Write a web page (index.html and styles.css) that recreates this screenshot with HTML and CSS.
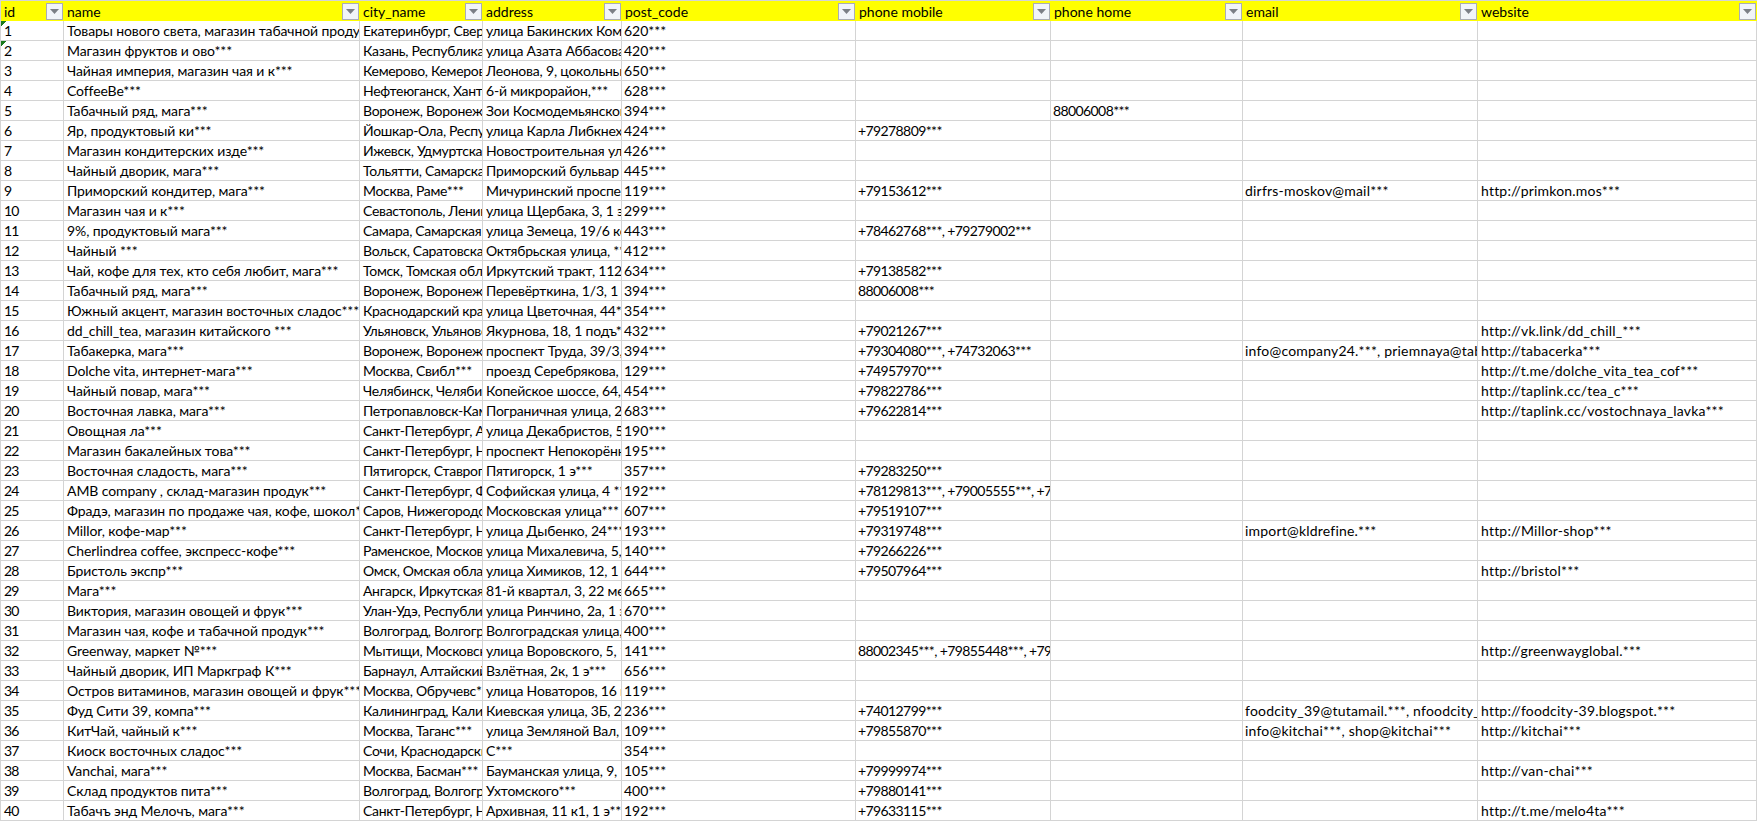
FILE: index.html
```html
<!DOCTYPE html>
<html lang="ru">
<head>
<meta charset="utf-8">
<title>Магазины</title>
<link rel="stylesheet" href="styles.css">
</head>
<body>
<table class="sheet">
<colgroup><col class="c-id"><col class="c-name"><col class="c-city"><col class="c-addr"><col class="c-post"><col class="c-mob"><col class="c-home"><col class="c-mail"><col class="c-web"></colgroup>
<thead><tr>
<th><div class="hd"><span>id</span><span class="filter"><svg viewBox="0 0 9 5" class="tri"><path d="M0 0h9L4.5 5z"/></svg></span></div></th>
<th><div class="hd"><span>name</span><span class="filter"><svg viewBox="0 0 9 5" class="tri"><path d="M0 0h9L4.5 5z"/></svg></span></div></th>
<th><div class="hd"><span>city_name</span><span class="filter"><svg viewBox="0 0 9 5" class="tri"><path d="M0 0h9L4.5 5z"/></svg></span></div></th>
<th><div class="hd"><span>address</span><span class="filter"><svg viewBox="0 0 9 5" class="tri"><path d="M0 0h9L4.5 5z"/></svg></span></div></th>
<th><div class="hd"><span>post_code</span><span class="filter"><svg viewBox="0 0 9 5" class="tri"><path d="M0 0h9L4.5 5z"/></svg></span></div></th>
<th><div class="hd"><span>phone mobile</span><span class="filter"><svg viewBox="0 0 9 5" class="tri"><path d="M0 0h9L4.5 5z"/></svg></span></div></th>
<th><div class="hd"><span>phone home</span><span class="filter"><svg viewBox="0 0 9 5" class="tri"><path d="M0 0h9L4.5 5z"/></svg></span></div></th>
<th><div class="hd"><span>email</span><span class="filter"><svg viewBox="0 0 9 5" class="tri"><path d="M0 0h9L4.5 5z"/></svg></span></div></th>
<th><div class="hd"><span>website</span><span class="filter"><svg viewBox="0 0 9 5" class="tri"><path d="M0 0h9L4.5 5z"/></svg></span></div></th>
</tr></thead>
<tbody>
<tr><td class="flag">1</td><td>Товары нового света, магазин табачной продукции</td><td>Екатеринбург, Свердловская</td><td>улица Бакинских Комиссаров</td><td>620***</td><td></td><td></td><td></td><td></td></tr>
<tr><td class="flag">2</td><td>Магазин фруктов и ово***</td><td>Казань, Республика</td><td>улица Азата Аббасова</td><td>420***</td><td></td><td></td><td></td><td></td></tr>
<tr><td>3</td><td>Чайная империя, магазин чая и к***</td><td>Кемерово, Кемеровская</td><td>Леонова, 9, цокольный</td><td>650***</td><td></td><td></td><td></td><td></td></tr>
<tr><td>4</td><td>CoffeeBe***</td><td>Нефтеюганск, Ханты</td><td>6-й микрорайон,***</td><td>628***</td><td></td><td></td><td></td><td></td></tr>
<tr><td>5</td><td>Табачный ряд, мага***</td><td>Воронеж, Воронежская</td><td>Зои Космодемьянской</td><td>394***</td><td></td><td>88006008***</td><td></td><td></td></tr>
<tr><td>6</td><td>Яр, продуктовый ки***</td><td>Йошкар-Ола, Республика</td><td>улица Карла Либкнехта</td><td>424***</td><td>+79278809***</td><td></td><td></td><td></td></tr>
<tr><td>7</td><td>Магазин кондитерских изде***</td><td>Ижевск, Удмуртская</td><td>Новостроительная улица</td><td>426***</td><td></td><td></td><td></td><td></td></tr>
<tr><td>8</td><td>Чайный дворик, мага***</td><td>Тольятти, Самарская</td><td>Приморский бульвар</td><td>445***</td><td></td><td></td><td></td><td></td></tr>
<tr><td>9</td><td>Приморский кондитер, мага***</td><td>Москва, Раме***</td><td>Мичуринский проспект</td><td>119***</td><td>+79153612***</td><td></td><td>dirfrs-moskov@mail***</td><td>http://primkon.mos***</td></tr>
<tr><td>10</td><td>Магазин чая и к***</td><td>Севастополь, Ленинский</td><td>улица Щербака, 3, 1 этаж</td><td>299***</td><td></td><td></td><td></td><td></td></tr>
<tr><td>11</td><td>9%, продуктовый мага***</td><td>Самара, Самарская</td><td>улица Земеца, 19/6 корпус</td><td>443***</td><td>+78462768***, +79279002***</td><td></td><td></td><td></td></tr>
<tr><td>12</td><td>Чайный ***</td><td>Вольск, Саратовская</td><td>Октябрьская улица, ***</td><td>412***</td><td></td><td></td><td></td><td></td></tr>
<tr><td>13</td><td>Чай, кофе для тех, кто себя любит, мага***</td><td>Томск, Томская область</td><td>Иркутский тракт, 112, 1</td><td>634***</td><td>+79138582***</td><td></td><td></td><td></td></tr>
<tr><td>14</td><td>Табачный ряд, мага***</td><td>Воронеж, Воронежская</td><td>Перевёрткина, 1/3, 1 этаж</td><td>394***</td><td>88006008***</td><td></td><td></td><td></td></tr>
<tr><td>15</td><td>Южный акцент, магазин восточных сладос***</td><td>Краснодарский край</td><td>улица Цветочная, 44***</td><td>354***</td><td></td><td></td><td></td><td></td></tr>
<tr><td>16</td><td>dd_chill_tea, магазин китайского ***</td><td>Ульяновск, Ульяновская</td><td>Якурнова, 18, 1 подъ***</td><td>432***</td><td>+79021267***</td><td></td><td></td><td>http://vk.link/dd_chill_***</td></tr>
<tr><td>17</td><td>Табакерка, мага***</td><td>Воронеж, Воронежская</td><td>проспект Труда, 39/3, 1</td><td>394***</td><td>+79304080***, +74732063***</td><td></td><td>info@company24.***, priemnaya@tabacerka</td><td>http://tabacerka***</td></tr>
<tr><td>18</td><td>Dolche vita, интернет-мага***</td><td>Москва, Свибл***</td><td>проезд Серебрякова, 14</td><td>129***</td><td>+74957970***</td><td></td><td></td><td>http://t.me/dolche_vita_tea_cof***</td></tr>
<tr><td>19</td><td>Чайный повар, мага***</td><td>Челябинск, Челябинская</td><td>Копейское шоссе, 64, 1</td><td>454***</td><td>+79822786***</td><td></td><td></td><td>http://taplink.cc/tea_c***</td></tr>
<tr><td>20</td><td>Восточная лавка, мага***</td><td>Петропавловск-Камчатский</td><td>Пограничная улица, 2</td><td>683***</td><td>+79622814***</td><td></td><td></td><td>http://taplink.cc/vostochnaya_lavka***</td></tr>
<tr><td>21</td><td>Овощная ла***</td><td>Санкт-Петербург, Адмиралтейский</td><td>улица Декабристов, 5</td><td>190***</td><td></td><td></td><td></td><td></td></tr>
<tr><td>22</td><td>Магазин бакалейных това***</td><td>Санкт-Петербург, Невский</td><td>проспект Непокорённых</td><td>195***</td><td></td><td></td><td></td><td></td></tr>
<tr><td>23</td><td>Восточная сладость, мага***</td><td>Пятигорск, Ставропольский</td><td>Пятигорск, 1 э***</td><td>357***</td><td>+79283250***</td><td></td><td></td><td></td></tr>
<tr><td>24</td><td>AMB company , склад-магазин продук***</td><td>Санкт-Петербург, Фрунзенский</td><td>Софийская улица, 4 ***</td><td>192***</td><td>+78129813***, +79005555***, +79</td><td></td><td></td><td></td></tr>
<tr><td>25</td><td>Фрадэ, магазин по продаже чая, кофе, шокол***</td><td>Саров, Нижегородская</td><td>Московская улица***</td><td>607***</td><td>+79519107***</td><td></td><td></td><td></td></tr>
<tr><td>26</td><td>Millor, кофе-мар***</td><td>Санкт-Петербург, Невский</td><td>улица Дыбенко, 24***</td><td>193***</td><td>+79319748***</td><td></td><td>import@kldrefine.***</td><td>http://Millor-shop***</td></tr>
<tr><td>27</td><td>Cherlindrea coffee, экспресс-кофе***</td><td>Раменское, Московская</td><td>улица Михалевича, 5, 1</td><td>140***</td><td>+79266226***</td><td></td><td></td><td></td></tr>
<tr><td>28</td><td>Бристоль экспр***</td><td>Омск, Омская область</td><td>улица Химиков, 12, 1 этаж</td><td>644***</td><td>+79507964***</td><td></td><td></td><td>http://bristol***</td></tr>
<tr><td>29</td><td>Мага***</td><td>Ангарск, Иркутская</td><td>81-й квартал, 3, 22 мест</td><td>665***</td><td></td><td></td><td></td><td></td></tr>
<tr><td>30</td><td>Виктория, магазин овощей и фрук***</td><td>Улан-Удэ, Республика</td><td>улица Ринчино, 2а, 1 этаж</td><td>670***</td><td></td><td></td><td></td><td></td></tr>
<tr><td>31</td><td>Магазин чая, кофе и табачной продук***</td><td>Волгоград, Волгоградская</td><td>Волгоградская улица, 1</td><td>400***</td><td></td><td></td><td></td><td></td></tr>
<tr><td>32</td><td>Greenway, маркет №***</td><td>Мытищи, Московская</td><td>улица Воровского, 5, 1</td><td>141***</td><td>88002345***, +79855448***, +79</td><td></td><td></td><td>http://greenwayglobal.***</td></tr>
<tr><td>33</td><td>Чайный дворик, ИП Маркграф К***</td><td>Барнаул, Алтайский</td><td>Взлётная, 2к, 1 э***</td><td>656***</td><td></td><td></td><td></td><td></td></tr>
<tr><td>34</td><td>Остров витаминов, магазин овощей и фрук***</td><td>Москва, Обручевс***</td><td>улица Новаторов, 16 корпус</td><td>119***</td><td></td><td></td><td></td><td></td></tr>
<tr><td>35</td><td>Фуд Сити 39, компа***</td><td>Калининград, Калининградская</td><td>Киевская улица, 3Б, 2 этаж</td><td>236***</td><td>+74012799***</td><td></td><td>foodcity_39@tutamail.***, nfoodcity_39</td><td>http://foodcity-39.blogspot.***</td></tr>
<tr><td>36</td><td>КитЧай, чайный к***</td><td>Москва, Таганс***</td><td>улица Земляной Вал, 1</td><td>109***</td><td>+79855870***</td><td></td><td>info@kitchai***, shop@kitchai***</td><td>http://kitchai***</td></tr>
<tr><td>37</td><td>Киоск восточных сладос***</td><td>Сочи, Краснодарский</td><td>С***</td><td>354***</td><td></td><td></td><td></td><td></td></tr>
<tr><td>38</td><td>Vanchai, мага***</td><td>Москва, Басман***</td><td>Бауманская улица, 9, 1</td><td>105***</td><td>+79999974***</td><td></td><td></td><td>http://van-chai***</td></tr>
<tr><td>39</td><td>Склад продуктов пита***</td><td>Волгоград, Волгоградская</td><td>Ухтомского***</td><td>400***</td><td>+79880141***</td><td></td><td></td><td></td></tr>
<tr><td>40</td><td>Табачъ энд Мелочъ, мага***</td><td>Санкт-Петербург, Невский</td><td>Архивная, 11 к1, 1 э***</td><td>192***</td><td>+79633115***</td><td></td><td></td><td>http://t.me/melo4ta***</td></tr>
</tbody>
</table>
</body>
</html>
```

FILE: styles.css
```css
html, body {
  margin: 0;
  padding: 0;
  background: #fff;
}
body {
  overflow: hidden;
  font-family: "Lato", "Noto Sans", sans-serif;
  font-size: 14px;
  color: #000;
}
.sheet {
  width: 1757px;
  table-layout: fixed;
  border-collapse: separate;
  border-spacing: 0;
  border-top: 1px solid #d4d4d4;
  border-left: 1px solid #d4d4d4;
}
.c-id { width: 63px; }
.c-name { width: 296px; }
.c-city { width: 123px; }
.c-addr { width: 139px; }
.c-post { width: 234px; }
.c-mob { width: 195px; }
.c-home { width: 192px; }
.c-mail { width: 235px; }
.c-web { width: 279px; }
th {
  height: 20px;
  padding: 0;
  background: #ffff00;
  font-weight: normal;
  text-align: left;
}
.hd {
  display: flex;
  align-items: center;
  justify-content: space-between;
  height: 20px;
  padding-left: 3px;
  padding-right: 1px;
  box-sizing: border-box;
}
.filter {
  display: flex;
  align-items: center;
  justify-content: center;
  width: 17px;
  height: 17px;
  box-sizing: border-box;
  border: 1px solid #a9adb6;
  background: #f1f4f9;
}
.tri {
  width: 9px;
  height: 5px;
  fill: #7b7f86;
}
td {
  height: 20px;
  box-sizing: border-box;
  padding: 1px 0 0 3px;
  border-right: 1px solid #d4d4d4;
  border-bottom: 1px solid #d4d4d4;
  white-space: nowrap;
  overflow: hidden;
  line-height: 18px;
}
td:nth-child(1) { letter-spacing: -0.8px; }
td:nth-child(2) { letter-spacing: -0.1px; }
td:nth-child(3) { letter-spacing: -0.3px; }
td:nth-child(4) { letter-spacing: -0.2px; }
td:nth-child(5) { padding-left: 2px; }
td:nth-child(6),
td:nth-child(7) { padding-left: 2px; letter-spacing: -0.6px; }
td:nth-child(8) { padding-left: 2px; letter-spacing: 0.2px; }
td:nth-child(9) { letter-spacing: 0.2px; }
.flag {
  background: linear-gradient(135deg, #1c7a1c 50%, transparent 50%) no-repeat 0 0 / 6px 6px;
}
```
